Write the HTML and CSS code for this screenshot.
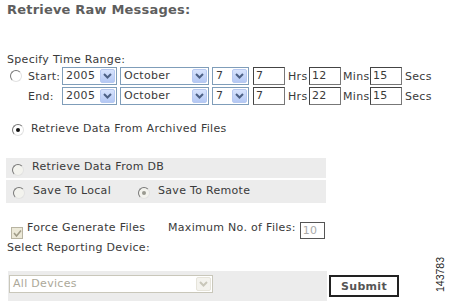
FILE: index.html
```html
<!DOCTYPE html>
<html lang="en">
<head>
  <meta charset="UTF-8" />
  <title>Retrieve Raw Messages</title>
  <link rel="stylesheet" href="styles.css">
</head>
<body>
  <div class="page">
    <h1>Retrieve Raw Messages:</h1>

    <div class="range-label">Specify Time Range:</div>
    <div class="trow">
      <span class="cell-radio"><span class="radio"></span></span>
      <span class="tlabel">Start:</span>
      <div class="select year"><span class="val">2005</span><span class="arrow"><svg width="9" height="6" viewBox="0 0 9 6"><path d="M1 1 L4.5 4.5 L8 1" fill="none" stroke="#4d6185" stroke-width="2"/></svg></span></div>
      <div class="select month"><span class="val">October</span><span class="arrow"><svg width="9" height="6" viewBox="0 0 9 6"><path d="M1 1 L4.5 4.5 L8 1" fill="none" stroke="#4d6185" stroke-width="2"/></svg></span></div>
      <div class="select day"><span class="val">7</span><span class="arrow"><svg width="9" height="6" viewBox="0 0 9 6"><path d="M1 1 L4.5 4.5 L8 1" fill="none" stroke="#4d6185" stroke-width="2"/></svg></span></div>
      <span class="tinput">7</span><span class="unit hrs">Hrs</span>
      <span class="tinput">12</span><span class="unit mins">Mins</span>
      <span class="tinput">15</span><span class="unit secs">Secs</span>
    </div>
    <div class="trow">
      <span class="cell-radio"></span>
      <span class="tlabel">End:</span>
      <div class="select year"><span class="val">2005</span><span class="arrow"><svg width="9" height="6" viewBox="0 0 9 6"><path d="M1 1 L4.5 4.5 L8 1" fill="none" stroke="#4d6185" stroke-width="2"/></svg></span></div>
      <div class="select month"><span class="val">October</span><span class="arrow"><svg width="9" height="6" viewBox="0 0 9 6"><path d="M1 1 L4.5 4.5 L8 1" fill="none" stroke="#4d6185" stroke-width="2"/></svg></span></div>
      <div class="select day"><span class="val">7</span><span class="arrow"><svg width="9" height="6" viewBox="0 0 9 6"><path d="M1 1 L4.5 4.5 L8 1" fill="none" stroke="#4d6185" stroke-width="2"/></svg></span></div>
      <span class="tinput">7</span><span class="unit hrs">Hrs</span>
      <span class="tinput">22</span><span class="unit mins">Mins</span>
      <span class="tinput">15</span><span class="unit secs">Secs</span>
    </div>

    <div class="opt archived"><span class="radio checked"></span>Retrieve Data From Archived Files</div>

    <div class="db-box">
      <div class="opt db-row"><span class="radio grey"></span>Retrieve Data From DB</div>
      <div class="opt save-row">
        <span class="radio grey"></span><span class="save-local">Save To Local</span>
        <span class="radio grey checked disabled"></span><span>Save To Remote</span>
      </div>
    </div>

    <div class="force-row">
      <span class="check"><svg width="9" height="9" viewBox="0 0 9 9"><path d="M1 4 L3.5 7 L8 1.5" fill="none" stroke="#a09c88" stroke-width="1.6"/></svg></span>
      <span class="force-text">Force Generate Files</span>
      <span>Maximum No. of Files:</span>
      <span class="num-input">10</span>
    </div>
    <div class="device-label">Select Reporting Device:</div>

    <div class="bottom-row">
      <div class="device-band">
        <div class="select devices disabled"><span class="val">All Devices</span><span class="arrow"><svg width="9" height="6" viewBox="0 0 9 6"><path d="M1 1 L4.5 4.5 L8 1" fill="none" stroke="#c9c7ba" stroke-width="2"/></svg></span></div>
      </div>
      <button class="submit">Submit</button>
      <span class="fig">143783</span>
    </div>
  </div>
</body>
</html>
```

FILE: styles.css
```css
body { margin: 0; background: #fff; font-family: "DejaVu Sans", Verdana, sans-serif; font-size: 11px; letter-spacing: 0.3px; color: #3a3a3a; }
.page { padding-left: 7px; }
h1 { margin: 2px 0 0 0; font-size: 13px; line-height: 16px; color: #5e5e5e; font-weight: bold; letter-spacing: 0.2px; }

.range-label { margin-top: 35px; line-height: 14px; }
.trow { display: flex; align-items: center; height: 18px; margin-bottom: 2px; }
.cell-radio { width: 21px; display: flex; align-items: center; }
.cell-radio .radio { margin-left: 3px; }
.tlabel { width: 34px; }

.select { display: flex; align-items: center; justify-content: space-between; box-sizing: border-box; height: 18px; border: 1px solid #7f9db9; background: #fff; margin-right: 3px; }
.select .val { padding-left: 3px; line-height: 14px; }
.select .arrow { display: flex; align-items: center; justify-content: center; width: 15px; height: 14px; margin-right: 1px; box-sizing: border-box; border: 1px solid #b7c9f1; border-radius: 2px; background: linear-gradient(#d7e3fd, #b4c8f4); }
.year { width: 55px; }
.month { width: 89px; }
.day { width: 37px; margin-right: 4px; }

.tinput { box-sizing: border-box; width: 32px; height: 18px; border: 1px solid #444; border-right-color: #777; border-bottom-color: #777; padding-left: 2px; line-height: 16px; }
.unit { box-sizing: border-box; }
.hrs { width: 24px; padding-left: 3px; }
.mins { width: 29px; padding-left: 2px; }
.secs { padding-left: 3px; }

.radio { display: inline-block; box-sizing: border-box; width: 12px; height: 12px; border-radius: 50%; border: 1px solid; border-color: #777 #e2e2e2 #e2e2e2 #777; background: #fff; position: relative; flex: none; }
.radio.grey { background: #f3f3ee; }
.radio.checked::after { content: ""; position: absolute; left: 3px; top: 3px; width: 4px; height: 4px; border-radius: 50%; background: #111; }
.radio.disabled::after { background: #9a9a90; }

.opt { display: flex; align-items: center; line-height: 14px; }
.archived { margin-top: 17px; }
.archived .radio { margin: 2px 7px 0 5px; }

.db-box { margin: 22px 0 0 -1px; width: 320px; }
.db-row { background: #ececec; height: 20px; box-sizing: border-box; padding: 2px 0 4px; align-items: flex-start; }
.db-row .radio { margin: 4px 8px 0 6px; }
.save-row { background: #ececec; height: 23px; box-sizing: border-box; padding: 4px 0 5px; margin-top: 2px; align-items: flex-start; }
.save-row .radio { margin: 3px 8px 0 7px; }
.save-local { width: 105px; }
.save-row .radio.checked { margin: 3px 8px 0 0; }

.force-row { display: flex; align-items: flex-start; line-height: 14px; margin-top: 18px; height: 18px; }
.check { box-sizing: border-box; width: 12px; height: 12px; margin: 6px 4px 0 4px; border: 1px solid #b8b4a2; background: #ece9d8; display: flex; align-items: center; justify-content: center; }
.force-text { width: 141px; }
.num-input { box-sizing: border-box; width: 25px; height: 17px; margin: 1px 0 0 4px; border: 1px solid #555; color: #aaa; padding-left: 2px; line-height: 16px; }

.device-label { margin-top: 2px; line-height: 14px; }

.bottom-row { display: flex; align-items: flex-start; margin-top: 16px; }
.device-band { background: #ececec; width: 319px; height: 30px; box-sizing: border-box; padding: 4px 0 0 1px; margin-left: 1px; }
.devices { width: 204px; border-color: #c9c7ba; color: #aca899; }
.devices .arrow { border-color: #e6e4da; background: #f4f3ee; }
.submit { margin: 4px 0 0 2px; width: 70px; height: 22px; border: 2px solid #222; background: #fff; font-family: "DejaVu Sans", Verdana, sans-serif; font-weight: bold; font-size: 11px; letter-spacing: 0.3px; color: #555; padding: 0; }
.fig { margin: -14px 3px 0 auto; writing-mode: vertical-rl; transform: rotate(180deg); font-family: "Liberation Sans", Arial, sans-serif; font-size: 10.5px; letter-spacing: 0; color: #222; line-height: 11px; }
```
